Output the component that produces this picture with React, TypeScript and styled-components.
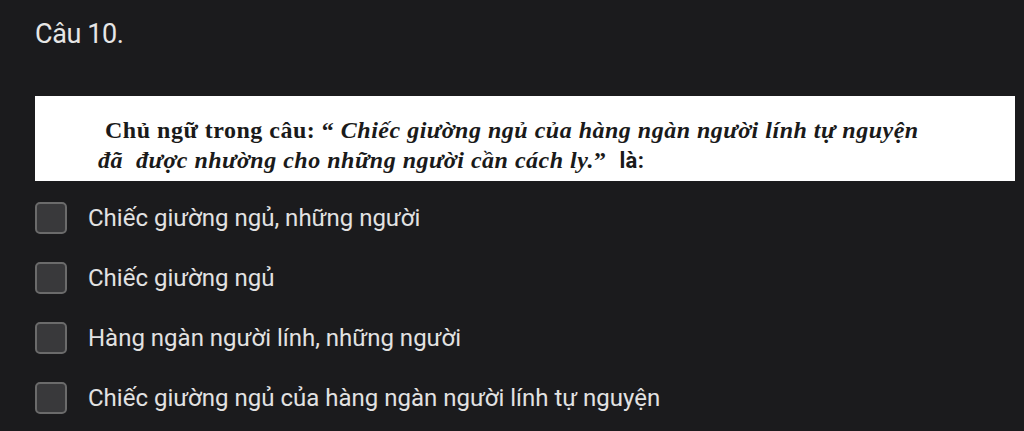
import React from "react";
import styled, { createGlobalStyle } from "styled-components";

const Global = createGlobalStyle`
  html, body { margin: 0; padding: 0; background: #1b1b1d; }
  body { width: 1024px; height: 431px; overflow: hidden; }
`;

const Page = styled.div`
  box-sizing: border-box;
  width: 1024px;
  height: 431px;
  background: #1b1b1d;
  padding: 19px 9px 0 35px;
  display: flex;
  flex-direction: column;
`;

const Title = styled.div`
  font-family: Roboto, "Noto Sans", sans-serif;
  font-size: 27px;
  line-height: 30px;
  color: #e6e6e6;
  letter-spacing: -0.4px;
`;

const QuestionImage = styled.div`
  margin-top: 47px;
  height: 85px;
  background: #ffffff;
  box-sizing: border-box;
  padding: 19px 0 0 63px;
  font-family: "Liberation Serif", "Times New Roman", serif;
  font-weight: bold;
  font-size: 24px;
  line-height: 30px;
  color: #1a1a1a;
  letter-spacing: 0.5px;
`;

const Line = styled.div<{ $indent?: number }>`
  white-space: pre;
  padding-left: ${(p) => p.$indent ?? 0}px;
`;

const Em = styled.i``;

const SansBold = styled.span`
  font-family: Roboto, Arial, sans-serif;
  font-weight: bold;
  font-style: normal;
  font-size: 22px;
  letter-spacing: 0.3px;
`;

const Options = styled.div`
  margin-top: 21px;
  display: flex;
  flex-direction: column;
  gap: 28px;
`;

const Option = styled.label`
  display: flex;
  align-items: center;
  gap: 21px;
  height: 32px;
`;

const Box = styled.span`
  box-sizing: border-box;
  width: 32px;
  height: 32px;
  border: 2.5px solid #6b6b6b;
  border-radius: 5px;
  background: #39393b;
  flex: none;
`;

const OptionText = styled.span`
  font-family: Roboto, "Noto Sans", sans-serif;
  font-size: 24px;
  color: #e2e2e2;
  line-height: 28px;
`;

const options = [
  "Chiếc giường ngủ, những người",
  "Chiếc giường ngủ",
  "Hàng ngàn người lính, những người",
  "Chiếc giường ngủ của hàng ngàn người lính tự nguyện",
];

export default function App() {
  return (
    <>
      <Global />
      <Page>
        <Title>Câu 10.</Title>
        <QuestionImage>
          <Line $indent={7}>
            Chủ ngữ trong câu: “ <Em>Chiếc giường ngủ của hàng ngàn người lính tự nguyện</Em>
          </Line>
          <Line>
            <Em>đã  được nhường cho những người cần cách ly.</Em>”  <SansBold>là:</SansBold>
          </Line>
        </QuestionImage>
        <Options>
          {options.map((o) => (
            <Option key={o}>
              <Box />
              <OptionText>{o}</OptionText>
            </Option>
          ))}
        </Options>
      </Page>
    </>
  );
}
